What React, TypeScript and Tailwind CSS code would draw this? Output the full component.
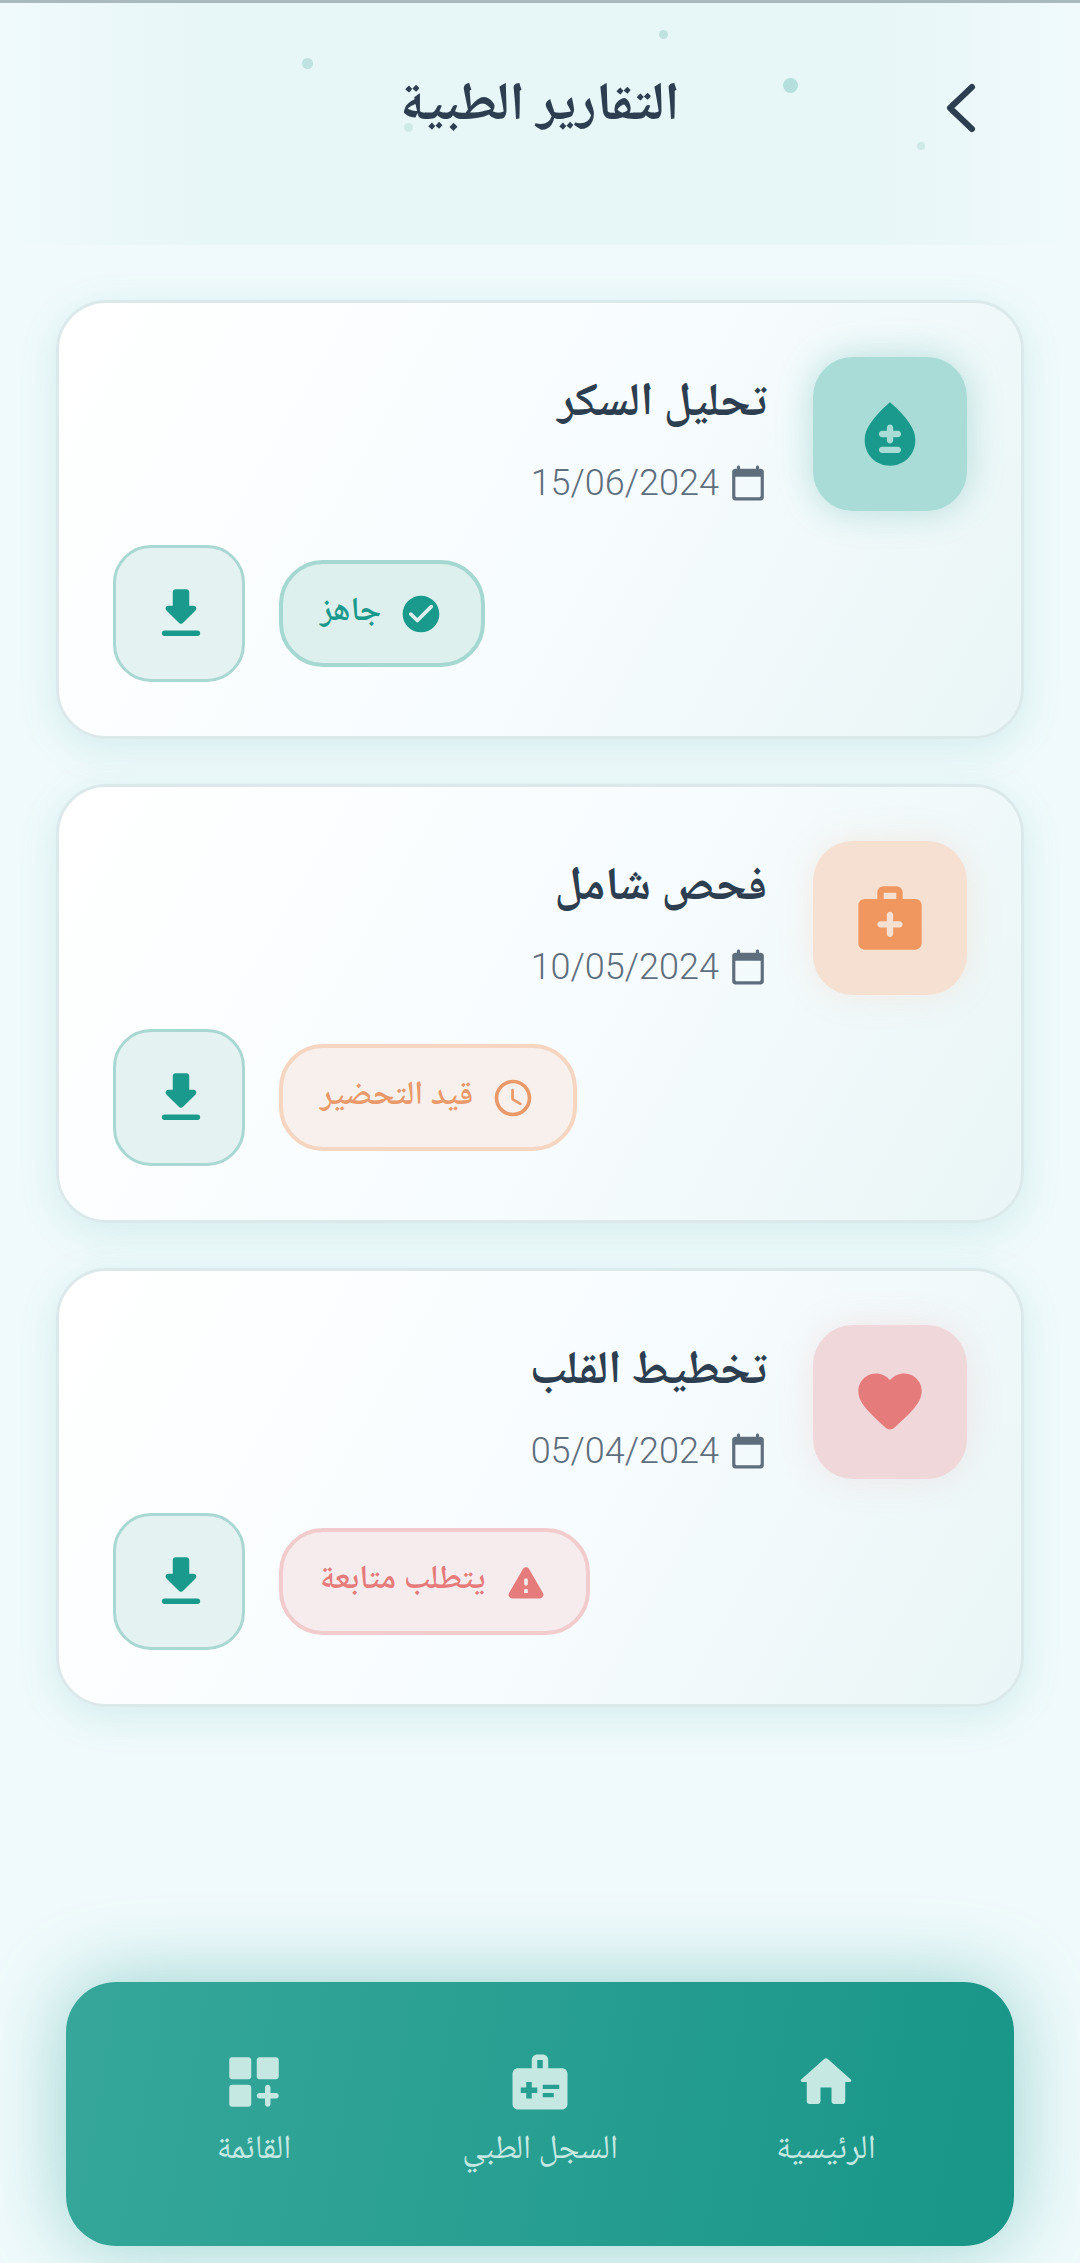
import React from "react";

const P = {
  blood: "M12 2c-5.33 4.55-8 8.48-8 11.8 0 4.98 3.8 8.2 8 8.2s8-3.22 8-8.2C20 10.48 17.33 6.55 12 2zm2.5 16h-5c-.55 0-1-.45-1-1s.45-1 1-1h5c.55 0 1 .45 1 1s-.45 1-1 1zm0-5H13v1c0 .55-.45 1-1 1s-1-.45-1-1v-1H9.500c-.55 0-1-.45-1-1s.45-1 1-1H11v-1c0-.55.45-1 1-1s1 .45 1 1v1h1.500c.55 0 1 .45 1 1s-.45 1-1 1z",
  case: "M20 6h-4V4c0-1.100-.9-2-2-2h-4c-1.100 0-2 .9-2 2v2H4c-1.100 0-2 .9-2 2v12c0 1.100.9 2 2 2h16c1.100 0 2-.9 2-2V8c0-1.100-.9-2-2-2zM10 4h4v2h-4V4zm5 11h-2v2c0 .55-.45 1-1 1s-1-.45-1-1v-2H9c-.55 0-1-.45-1-1s.45-1 1-1h2v-2c0-.55.45-1 1-1s1 .45 1 1v2h2c.55 0 1 .45 1 1s-.45 1-1 1z",
  heart: "M13.350 20.130c-.76.69-1.930.69-2.690-.01l-.11-.1C5.300 15.270 1.870 12.160 2 8.280c.06-1.700.93-3.330 2.340-4.290 2.640-1.800 5.900-.96 7.660 1.100 1.760-2.060 5.020-2.910 7.660-1.100 1.410.96 2.280 2.590 2.340 4.290.14 3.880-3.300 6.990-8.550 11.760l-.1.090z",
  cal: "M20 3h-1V2c0-.55-.45-1-1-1s-1 .45-1 1v1H7V2c0-.55-.45-1-1-1s-1 .45-1 1v1H4c-1.100 0-2 .9-2 2v16c0 1.100.9 2 2 2h16c1.100 0 2-.9 2-2V5c0-1.100-.9-2-2-2zm-1 18H5c-.55 0-1-.45-1-1V8h16v12c0 .55-.45 1-1 1z",
  check: "M12 2C6.480 2 2 6.480 2 12s4.480 10 10 10 10-4.480 10-10S17.520 2 12 2zM9.290 16.290 5.700 12.700c-.39-.39-.39-1.020 0-1.410.39-.39 1.020-.39 1.410 0L10 14.170l6.880-6.880c.39-.39 1.020-.39 1.410 0 .39.39.39 1.020 0 1.410l-7.590 7.590c-.38.39-1.020.39-1.410 0z",
  clock: "M11.990 2C6.470 2 2 6.480 2 12s4.470 10 9.990 10C17.520 22 22 17.520 22 12S17.520 2 11.990 2zM12 20c-4.420 0-8-3.580-8-8s3.580-8 8-8 8 3.580 8 8-3.580 8-8 8zm-.22-13h-.06c-.4 0-.72.32-.72.72v4.720c0 .35.18.68.49.86l4.150 2.490c.34.2.78.1.98-.24.21-.34.1-.79-.25-.99l-3.870-2.300V7.720c0-.4-.32-.72-.72-.72z",
  warn: "M4.470 21h15.060c1.540 0 2.500-1.670 1.730-3L13.730 4.990c-.77-1.330-2.690-1.330-3.460 0L2.740 18c-.77 1.330.19 3 1.730 3zM12 14c-.55 0-1-.45-1-1v-2c0-.55.45-1 1-1s1 .45 1 1v2c0 .55-.45 1-1 1zm1 4h-2v-2h2v2z",
  down: "M16.590 9H15V4c0-.55-.45-1-1-1h-4c-.55 0-1 .45-1 1v5H7.410c-.89 0-1.340 1.080-.71 1.710l4.590 4.590c.39.39 1.020.39 1.410 0l4.590-4.590c.63-.63.19-1.710-.7-1.710zM5 19c0 .55.45 1 1 1h12c.55 0 1-.45 1-1s-.45-1-1-1H6c-.55 0-1 .45-1 1z",
  home: "M10 19v-5h4v5c0 .55.45 1 1 1h3c.55 0 1-.45 1-1v-7h1.700c.46 0 .68-.57.33-.87L12.670 3.600c-.38-.34-.96-.34-1.340 0l-8.360 7.530c-.34.3-.13.87.33.87H5v7c0 .55.45 1 1 1h3c.55 0 1-.45 1-1z",
  record: "M20 7h-5V4c0-1.100-.9-2-2-2h-2C9.900 2 9 2.900 9 4v3H4c-1.100 0-2 .9-2 2v11c0 1.100.9 2 2 2h16c1.100 0 2-.9 2-2V9c0-1.100-.9-2-2-2zm-11 11H7v-2H5v-2h2v-2h2v2h2v2H9v2zm4-3.500V13h6v1.500h-6zm0 3V16h4v1.500h-4zM11 7V4h2v3h-2z",
  grid: "M4 3h6c.55 0 1 .45 1 1v6c0 .55-.45 1-1 1H4c-.55 0-1-.45-1-1V4c0-.55.45-1 1-1zm10 0h6c.55 0 1 .45 1 1v6c0 .55-.45 1-1 1h-6c-.55 0-1-.45-1-1V4c0-.55.45-1 1-1zM4 13h6c.55 0 1 .45 1 1v6c0 .55-.45 1-1 1H4c-.55 0-1-.45-1-1v-6c0-.55.45-1 1-1zm13 0c.55 0 1 .45 1 1v2h2c.55 0 1 .45 1 1s-.45 1-1 1h-2v2c0 .55-.45 1-1 1s-1-.45-1-1v-2h-2c-.55 0-1-.45-1-1s.45-1 1-1h2v-2c0-.55.45-1 1-1z",
};

function Icon({ d, className }: { d: string; className: string }) {
  return (
    <svg viewBox="0 0 24 24" fill="currentColor" className={className}>
      <path d={d} />
    </svg>
  );
}

function Card({
  title, date, icon, boxClass, pillClass, pillIcon, label,
}: {
  title: string; date: string; icon: string; boxClass: string; pillClass: string; pillIcon: string; label: string;
}) {
  return (
    <div className="h-[439px] rounded-[50px] border-[3px] border-[#dbe9eb] bg-[linear-gradient(120deg,#ffffff,#f7fcfe_55%,#e9f5f6)] px-[54px] pt-[54px] shadow-[0_10px_40px_rgba(26,154,140,0.13)]">
      <div className="flex items-start gap-[46px]">
        <div className={`flex h-[154px] w-[154px] shrink-0 items-center justify-center rounded-[40px] ${boxClass}`}>
          <Icon d={icon} className="h-[76px] w-[76px]" />
        </div>
        <div className="flex flex-col items-start">
          <div className="mt-[18px] text-[46.5px] leading-[60px] font-bold text-[#2c3e50]">{title}</div>
          <div className="mt-[27px] flex items-center gap-[10px] text-[#5f6e7d]">
            <Icon d={P.cal} className="h-[38px] w-[38px]" />
            <span dir="ltr" className="text-[36px] leading-[42px] font-light font-['Roboto',sans-serif]">{date}</span>
          </div>
        </div>
      </div>
      <div className="mt-[34px] flex items-center justify-end gap-[34px]">
        <div className={`flex h-[107px] items-center gap-[18px] rounded-[44px] border-[4px] pr-[38px] pl-[37px] text-[33.5px] font-semibold ${pillClass}`}>
          <Icon d={pillIcon} className="h-[44px] w-[44px]" />
          <span>{label}</span>
        </div>
        <div className="flex h-[137px] w-[132px] items-center justify-center rounded-[38px] border-[3px] border-[#a9d8d2] bg-[#e4f3f2] pl-[3px] text-[#1a9a8c]">
          <Icon d={P.down} className="h-[66px] w-[66px]" />
        </div>
      </div>
    </div>
  );
}

function Nav({ icon, label }: { icon: string; label: string }) {
  return (
    <div className="flex flex-col items-center">
      <Icon d={icon} className="h-[66px] w-[66px]" />
      <span className="mt-[16px] text-[33.5px] leading-[40px] font-normal">{label}</span>
    </div>
  );
}

export default function App() {
  return (
    <div dir="rtl" className="relative flex h-[2263px] w-[1080px] flex-col overflow-hidden bg-[#f0fafc] font-['Noto_Naskh_Arabic','Roboto','Noto_Sans',sans-serif]">
      <div className="h-[3px] bg-[#aab9bb]" />
      <header className="relative flex h-[242px] items-start justify-center bg-[linear-gradient(to_right,#f0fafc,#e7f6f7_20%,#e7f6f7_80%,#f0fafc)]">
        <span className="absolute left-[302px] top-[55px] h-[11px] w-[11px] rounded-full bg-[#bfe2e0]" />
        <span className="absolute left-[659px] top-[27px] h-[9px] w-[9px] rounded-full bg-[#bfe2e0]" />
        <span className="absolute left-[783px] top-[75px] h-[15px] w-[15px] rounded-full bg-[#b5dfdc]" />
        <span className="absolute left-[404px] top-[120px] h-[9px] w-[9px] rounded-full bg-[#cfe8e8]" />
        <span className="absolute left-[917px] top-[139px] h-[8px] w-[8px] rounded-full bg-[#cfe8e8]" />
        <h1 className="relative mt-[75px] text-[53.5px] leading-[60px] font-bold text-[#2c3e50]">التقارير الطبية</h1>
        <svg viewBox="0 0 32 52" fill="none" stroke="#2c3e50" strokeWidth="6" strokeLinecap="round" strokeLinejoin="round" className="absolute left-[945px] top-[79px] h-[52px] w-[32px]">
          <path d="M27 5 5 26l22 21" />
        </svg>
      </header>
      <main className="flex flex-1 flex-col gap-[45px] px-[56px] pt-[55px]">
        <Card title="تحليل السكر" date="15/06/2024" icon={P.blood} label="جاهز" pillIcon={P.check}
          boxClass="bg-[#a9dcd7] text-[#1a9a8c] shadow-[0_0_36px_rgba(26,154,140,0.28)]"
          pillClass="border-[#a5d8d1] bg-[#ddf0ee] text-[#1a9a8c]" />
        <Card title="فحص شامل" date="10/05/2024" icon={P.case} label="قيد التحضير" pillIcon={P.clock}
          boxClass="bg-[#f5e0d2] text-[#f0975f] shadow-[0_0_36px_rgba(240,151,95,0.15)]"
          pillClass="border-[#f6d5c1] bg-[#f7f0ec] text-[#e9996a]" />
        <Card title="تخطيط القلب" date="05/04/2024" icon={P.heart} label="يتطلب متابعة" pillIcon={P.warn}
          boxClass="bg-[#f0d7da] text-[#e57b7b] shadow-[0_0_36px_rgba(229,123,123,0.15)]"
          pillClass="border-[#f2cccd] bg-[#f6ecee] text-[#e57b7b]" />
      </main>
      <nav className="mx-[66px] mb-[17px] grid h-[264px] grid-cols-3 items-center rounded-[50px] bg-[linear-gradient(100deg,#36a79a,#189688)] px-[45px] pb-[8px] text-[#c6e8e3] shadow-[0_0_80px_rgba(26,154,140,0.42)]">
        <Nav icon={P.home} label="الرئيسية" />
        <Nav icon={P.record} label="السجل الطبي" />
        <Nav icon={P.grid} label="القائمة" />
      </nav>
    </div>
  );
}
